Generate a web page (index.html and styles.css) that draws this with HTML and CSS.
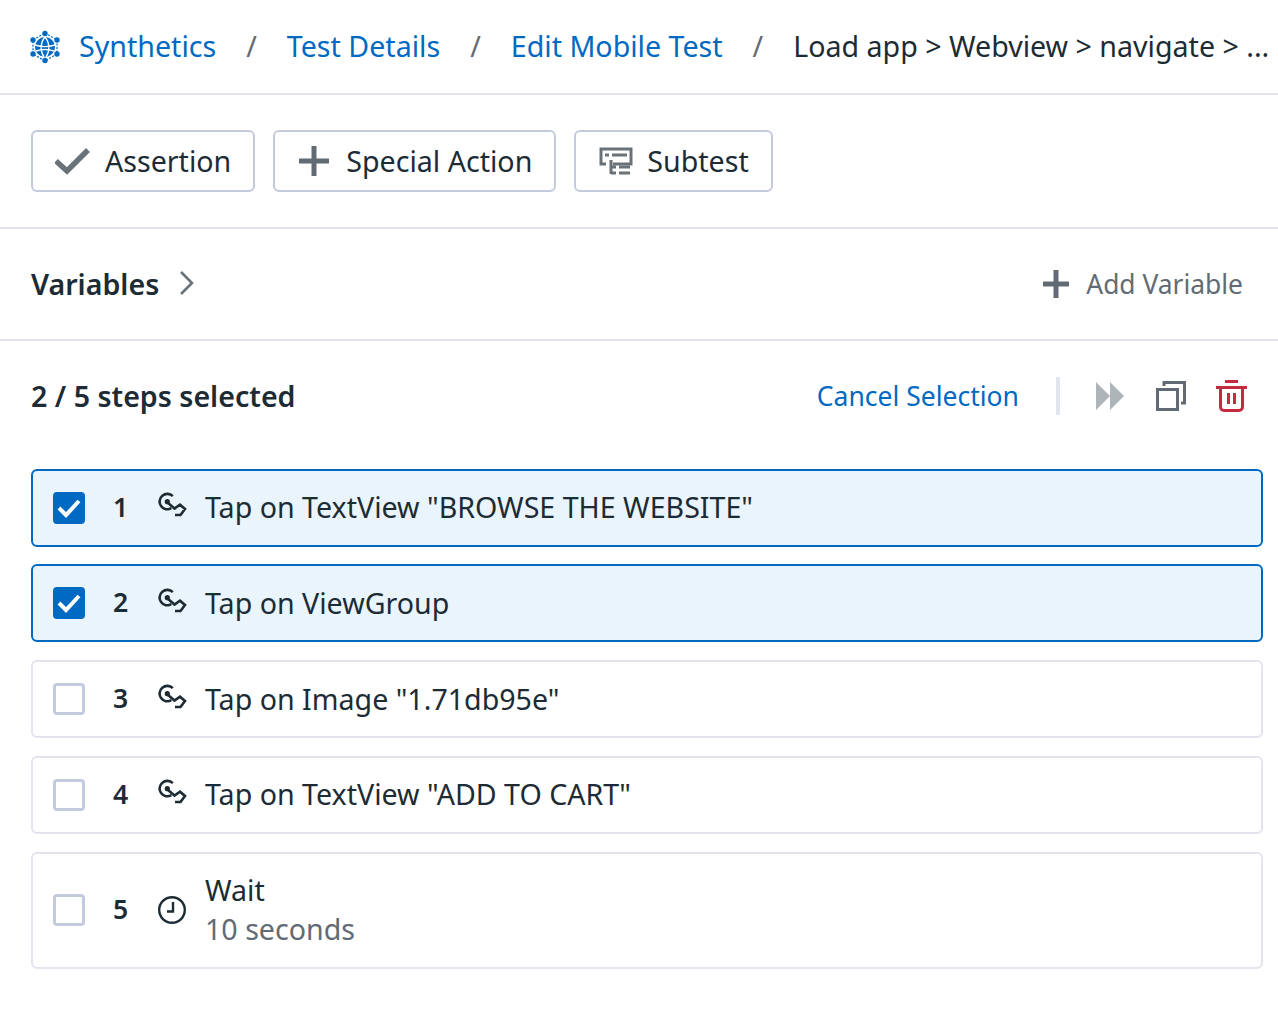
FILE: index.html
```html
<!DOCTYPE html>
<html lang="en">
<head>
  <meta charset="UTF-8">
  <title>Edit Mobile Test</title>
  <link rel="stylesheet" href="styles.css">
</head>
<body>
  <svg class="defs" width="0" height="0">
    <symbol id="icon-tap" viewBox="0 0 30 30">
      <path d="M14.800 4.200a7.700 7.700 0 1 0-1.500 12" fill="none" stroke="currentColor" stroke-width="2.600"/>
      <circle cx="9.300" cy="9.700" r="2.600" fill="currentColor"/>
      <path d="M9.500 10.500l7 6 5.500-3.800 5 4.300-4.500 6h-5.500" fill="none" stroke="currentColor" stroke-width="2.600"/>
    </symbol>
  </svg>

  <nav class="crumbs">
    <svg class="logo" width="34" height="34" viewBox="0 0 34 34">
      <path d="M17 3l12 7v14l-12 7-12-7V10z" fill="none" stroke="#0069c2" stroke-width="1.200" stroke-dasharray="2 1.500"/>
      <circle cx="17" cy="17" r="10" fill="#0069c2"/>
      <path d="M7 15c6 2 14 2 20 0M8 21c6-2 12-2 18 0M17 7c-5 6-5 14-1 20M17 7c5 6 5 14 1 20" fill="none" stroke="#fff" stroke-width="1.400"/>
      <circle cx="17" cy="3.500" r="2.700" fill="#0069c2"/>
      <circle cx="17" cy="30.500" r="2.700" fill="#0069c2"/>
      <circle cx="5" cy="10" r="2.700" fill="#0069c2"/>
      <circle cx="29" cy="10" r="2.700" fill="#0069c2"/>
      <circle cx="5" cy="24" r="2.700" fill="#0069c2"/>
      <circle cx="29" cy="24" r="2.700" fill="#0069c2"/>
    </svg>
    <a class="crumb-link" href="#">Synthetics</a>
    <span class="crumb-sep">/</span>
    <a class="crumb-link" href="#">Test Details</a>
    <span class="crumb-sep">/</span>
    <a class="crumb-link" href="#">Edit Mobile Test</a>
    <span class="crumb-sep">/</span>
    <span class="crumb-current">Load app &gt; Webview &gt; navigate &gt; ...</span>
  </nav>

  <section class="toolbar">
    <button class="tool-btn">
      <svg width="36" height="28" viewBox="0 0 36 28"><path d="M1 14l11 10L33 3" fill="none" stroke="#6a7279" stroke-width="5.500"/></svg>
      Assertion
    </button>
    <button class="tool-btn">
      <svg width="35" height="30" viewBox="0 0 35 30"><path d="M17 0v30M2 15h30" fill="none" stroke="#626b73" stroke-width="5"/></svg>
      Special Action
    </button>
    <button class="tool-btn">
      <svg width="35" height="28" viewBox="0 0 35 28" fill="none" stroke="#6a7279">
        <path d="M8 17H3V2h30v15H15" stroke-width="3"/>
        <path d="M7 8h4M14 8h15" stroke-width="3"/>
        <path d="M13 13v14M13 20h5M13 26h5M21 20h11M21 26h11" stroke-width="3"/>
      </svg>
      Subtest
    </button>
  </section>

  <section class="variables">
    <div class="variables-title">
      Variables
      <svg width="16" height="26" viewBox="0 0 16 26"><path d="M2 2l11 11L2 24" fill="none" stroke="#6a7279" stroke-width="2.600"/></svg>
    </div>
    <div class="add-variable">
      <svg width="28" height="28" viewBox="0 0 28 28"><path d="M14 0v28M1 14h26" fill="none" stroke="#626b73" stroke-width="5"/></svg>
      Add Variable
    </div>
  </section>

  <section class="steps-head">
    <div class="steps-count">2 / 5 steps selected</div>
    <div class="steps-actions">
      <a class="cancel" href="#">Cancel Selection</a>
      <span class="divider"></span>
      <svg class="act-run" width="28" height="28" viewBox="0 0 28 28"><path d="M0 0l14 14L0 28zM14 0l14 14-14 14z" fill="#aeb5b8"/></svg>
      <svg class="act-copy" width="30" height="30" viewBox="0 0 30 30" fill="none" stroke="#626b73" stroke-width="3">
        <path d="M8 5V1.500h20.500V22H25"/>
        <rect x="1.500" y="8.500" width="20" height="20"/>
      </svg>
      <svg class="act-del" width="31" height="32" viewBox="0 0 31 32" fill="none" stroke="#c42b40" stroke-width="3">
        <path d="M9 1.500h13M0 7.500h31M4.500 8v19c0 2 1.500 3.500 3.500 3.500h15c2 0 3.500-1.500 3.500-3.500V8M12.500 13v11M18.500 13v11"/>
      </svg>
    </div>
  </section>

  <ul class="steps">
    <li class="step is-selected">
      <span class="check"><svg width="24" height="20" viewBox="0 0 24 20"><path d="M2 10l7 7L22 3" fill="none" stroke="#fff" stroke-width="4"/></svg></span>
      <span class="step-num">1</span>
      <svg class="step-icon" width="30" height="30"><use href="#icon-tap"/></svg>
      <span class="step-text">Tap on TextView "BROWSE THE WEBSITE"</span>
    </li>
    <li class="step is-selected">
      <span class="check"><svg width="24" height="20" viewBox="0 0 24 20"><path d="M2 10l7 7L22 3" fill="none" stroke="#fff" stroke-width="4"/></svg></span>
      <span class="step-num">2</span>
      <svg class="step-icon" width="30" height="30"><use href="#icon-tap"/></svg>
      <span class="step-text">Tap on ViewGroup</span>
    </li>
    <li class="step">
      <span class="check"></span>
      <span class="step-num">3</span>
      <svg class="step-icon" width="30" height="30"><use href="#icon-tap"/></svg>
      <span class="step-text">Tap on Image "1.71db95e"</span>
    </li>
    <li class="step">
      <span class="check"></span>
      <span class="step-num">4</span>
      <svg class="step-icon" width="30" height="30"><use href="#icon-tap"/></svg>
      <span class="step-text">Tap on TextView "ADD TO CART"</span>
    </li>
    <li class="step step-tall">
      <span class="check"></span>
      <span class="step-num">5</span>
      <svg class="step-icon" width="30" height="30" viewBox="0 0 30 30" fill="none" stroke="#1c2b34" stroke-width="2.400">
        <circle cx="14" cy="15" r="12.800"/>
        <path d="M15 7v9.500H9"/>
      </svg>
      <span class="step-text">
        Wait
        <span class="step-sub">10 seconds</span>
      </span>
    </li>
  </ul>
</body>
</html>
```

FILE: styles.css
```css
body {
  font-family: "Noto Sans", sans-serif;
  font-size: 28.6px;
  color: #1c2b34;
  background-color: #fff;
  margin: 0;
}

a {
  color: #0069c2;
  text-decoration: none;
}

.defs {
  position: absolute;
}

.crumbs {
  display: flex;
  align-items: center;
  height: 93px;
  padding-left: 28px;
  border-bottom: 2px solid #e2e5ed;
  white-space: nowrap;
  overflow: hidden;
}

.logo {
  flex-shrink: 0;
  margin-right: 17px;
}

.crumb-link,
.crumb-sep,
.crumb-current {
  position: relative;
  top: -1px;
}

.crumb-sep {
  color: #626b73;
  margin: 0 30px;
}

.toolbar {
  display: flex;
  gap: 18px;
  height: 132px;
  align-items: center;
  padding-left: 31px;
  border-bottom: 2px solid #e2e5ed;
}

.tool-btn {
  display: flex;
  align-items: center;
  gap: 14px;
  height: 62px;
  padding: 0 22px 2px 22px;
  font-family: inherit;
  font-size: 28.6px;
  color: #1c2b34;
  background-color: #fff;
  border: 2px solid #c3cade;
  border-radius: 6px;
}

.tool-btn svg {
  margin-top: 2px;
}

.variables {
  display: flex;
  justify-content: space-between;
  align-items: center;
  height: 112px;
  padding: 0 35px 2px 31px;
  box-sizing: border-box;
  border-bottom: 2px solid #e2e5ed;
}

.variables-title {
  display: flex;
  align-items: center;
  gap: 20px;
  font-weight: 600;
}

.add-variable {
  display: flex;
  align-items: center;
  gap: 16px;
  padding-top: 2px;
  color: #626b73;
  font-size: 26.4px;
}

.steps-head {
  display: flex;
  justify-content: space-between;
  align-items: center;
  height: 112px;
  box-sizing: border-box;
  padding: 0 31px 3px;
}

.steps-count {
  font-weight: 600;
}

.steps-actions {
  display: flex;
  align-items: center;
}

.cancel {
  font-size: 26.5px;
}

.divider {
  width: 4px;
  height: 38px;
  background-color: #e2e5ed;
  margin: 0 36px 0 37px;
}

.act-copy {
  margin-left: 32px;
}

.act-del {
  margin-left: 30px;
}

.steps {
  list-style: none;
  margin: 15.6px 15px 0 31px;
  padding: 0;
}

.step {
  display: flex;
  align-items: center;
  height: 78px;
  box-sizing: border-box;
  margin-bottom: 17.75px;
  padding-left: 20px;
  border: 2px solid #e2e5ed;
  border-radius: 6px;
}

.step.is-selected {
  background-color: #e9f4fc;
  border-color: #0069c2;
}

.step-tall {
  height: 117px;
}

.check {
  display: flex;
  align-items: center;
  justify-content: center;
  width: 32px;
  height: 32px;
  box-sizing: border-box;
  border: 3px solid #c3cade;
  border-radius: 4px;
  background-color: #fff;
}

.is-selected .check {
  background-color: #0069c2;
  border-color: #0069c2;
}

.step-num {
  width: 16px;
  margin-left: 28px;
  font-size: 26.6px;
  font-weight: 600;
  position: relative;
  top: -1px;
}

.step-icon {
  margin-left: 29px;
  margin-top: -1px;
}

.step-tall .step-icon {
  margin-top: 0;
}

.step-text {
  margin-left: 17px;
  line-height: 39px;
  position: relative;
  top: -1px;
}

.step-sub {
  display: block;
  color: #626b73;
}
```
